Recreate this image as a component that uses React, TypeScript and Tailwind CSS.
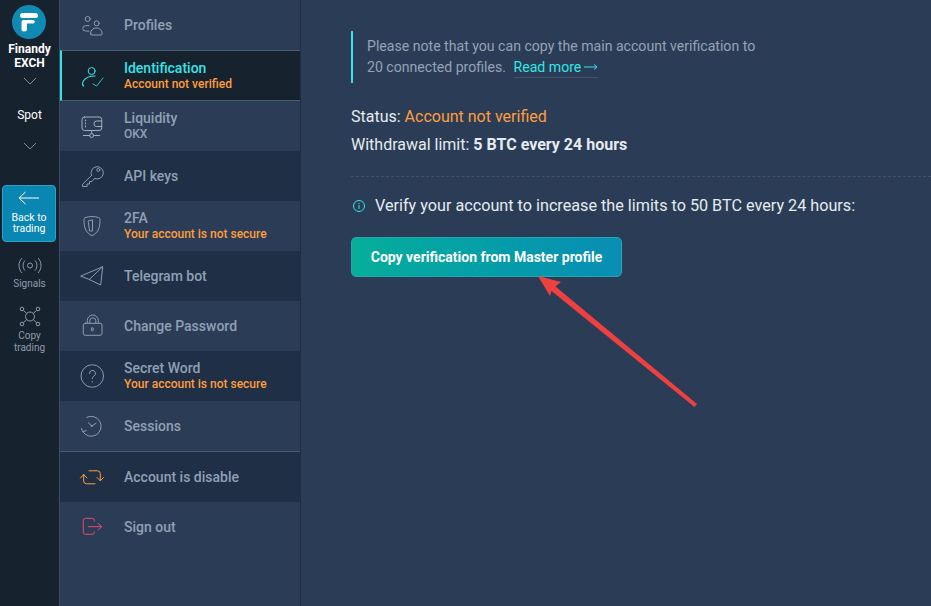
import type { ReactNode } from "react";

const stroke = "#8f9bac";

function Svg({ children, color = stroke }: { children: ReactNode; color?: string }) {
  return (
    <svg width="28" height="28" viewBox="0 0 28 28" fill="none" stroke={color} strokeWidth="1" strokeLinecap="round" strokeLinejoin="round">
      {children}
    </svg>
  );
}

const icons = {
  profiles: (
    <Svg>
      <circle cx="8.700" cy="8" r="2.500" />
      <path d="M10 14.700H6.500a2.700 2.700 0 0 0 0 5.400H10" />
      <circle cx="17.700" cy="12.300" r="2.500" />
      <path d="M11.700 23v-1a5.600 5 0 0 1 11.300 0v1a1 1 0 0 1-1 1h-9.300a1 1 0 0 1-1-1z" />
    </Svg>
  ),
  identification: (
    <Svg color="#35e4e6">
      <circle cx="12.700" cy="9" r="3.500" />
      <path d="M4.700 24c-1.500-1-1.500-3 0-5.500 2-3 5-4.500 11.300-4.500" strokeWidth="1.200" />
      <path d="M14 22l3.700 2L24 16" strokeWidth="0.800" />
    </Svg>
  ),
  wallet: (
    <Svg color="#a3aebc">
      <rect x="3" y="5" width="19.700" height="13.500" rx="2.500" />
      <path d="M22.700 9h-5a2.700 2.700 0 0 0 0 5.500h5" />
      <path d="M6.500 8v1M6.500 11v1M6.500 14v1" />
      <path d="M12.700 18.500V21.500M4.300 23.500h6.400M14.700 23.500h6" />
      <circle cx="12.700" cy="23.500" r="2" />
    </Svg>
  ),
  key: (
    <Svg>
      <path d="M12.500 13.500a6.200 6.200 0 1 1 3 3" />
      <circle cx="19.300" cy="8" r="1.500" />
      <path d="M12.500 13.500L3.500 22.300v2.200h4.500v-2.500h2.500V19.500H13l2.500-3" />
    </Svg>
  ),
  shield: (
    <Svg>
      <path d="M6.500 5.500c4-1.300 9-1.300 13 0 1 .3 1.500 1 1.500 2 0 7-1 13-8 16.200C6 20.500 5 14.500 5 7.500c0-1 .5-1.700 1.500-2z" />
      <path d="M9.500 9l4-1.200V19h-2.500z" />
    </Svg>
  ),
  telegram: (
    <Svg>
      <path d="M2 14L23.700 4.700L21.700 23L10.300 17.500Z" />
      <path d="M10.300 17.500L23.700 4.700" />
    </Svg>
  ),
  lock: (
    <Svg>
      <path d="M8.300 11V8.500a5.500 5.500 0 0 1 11 0V11" />
      <path d="M10.800 11V8.800a3 3 0 0 1 6 0V11" />
      <rect x="4.300" y="11.300" width="18.700" height="12" rx="2" />
      <ellipse cx="13.300" cy="17.300" rx="1" ry="1.800" />
    </Svg>
  ),
  question: (
    <Svg>
      <circle cx="13.300" cy="14" r="11.300" />
      <path d="M10.500 11.500a3 3 0 1 1 4.500 2.500c-1 .7-1.700 1.300-1.700 2.500" />
      <path d="M13.300 19.500v.5" />
    </Svg>
  ),
  sessions: (
    <Svg>
      <path d="M7.700 5.300a10 10 0 1 1-4 14.400" />
      <path d="M2.500 16.500l1.200 3.200 3.500-1" />
      <path d="M12.700 14l-3.400-3.300M12.700 14l4.300-2.700" />
      <circle cx="12.700" cy="14" r="0.600" />
    </Svg>
  ),
  disable: (
    <Svg color="#ff9d3c">
      <path d="M10 7.800h8.500a2.800 2.800 0 0 1 2.800 2.800v7" />
      <path d="M18 14.500l3.300 3.300 3.200-3.300" />
      <path d="M16 20.800H7.500a2.800 2.800 0 0 1-2.800-2.800v-6.500" />
      <path d="M1.500 15l3.200-3.500L8 15" />
    </Svg>
  ),
  signout: (
    <Svg color="#e84a68">
      <path d="M15.300 8V7.300a2 2 0 0 0-2-2H6.300a2 2 0 0 0-2 2v12a2 2 0 0 0 2 2h7a2 2 0 0 0 2-2v-.500" />
      <path d="M9.300 13.700h13.400M19 10.500l3.700 3.200-3.700 3.300" />
    </Svg>
  ),
};

type Row = {
  title: string;
  sub?: string;
  subColor?: string;
  icon: ReactNode;
  dark?: boolean;
  h: string;
  extra?: string;
};

const rows: Row[] = [
  { title: "Profiles", icon: icons.profiles, h: "h-[50px]" },
  { title: "Identification", sub: "Account not verified", icon: icons.identification, h: "h-[51px]" },
  { title: "Liquidity", sub: "OKX", subColor: "text-[#90a0b5]", icon: icons.wallet, h: "h-[50px]" },
  { title: "API keys", icon: icons.key, dark: true, h: "h-[50px]" },
  { title: "2FA", sub: "Your account is not secure", icon: icons.shield, h: "h-[50px]" },
  { title: "Telegram bot", icon: icons.telegram, dark: true, h: "h-[50px]" },
  { title: "Change Password", icon: icons.lock, h: "h-[50px]" },
  { title: "Secret Word", sub: "Your account is not secure", icon: icons.question, dark: true, h: "h-[50px]" },
  { title: "Sessions", icon: icons.sessions, h: "h-[51px]", extra: "border-b border-[#4a5a70]" },
  { title: "Account is disable", icon: icons.disable, dark: true, h: "h-[50px]" },
  { title: "Sign out", icon: icons.signout, h: "h-[50px]" },
];

function MenuRow({ row }: { row: Row }) {
  return (
    <div className={`flex items-center ${row.h} ${row.dark ? "bg-[#1f2f45]" : "bg-[#2b3d56]"} ${row.extra ?? ""}`}>
      <div className="ml-[19px] w-[45px] shrink-0">{row.icon}</div>
      <div className="flex flex-col">
        <span className="text-[14px] leading-[16px] font-medium text-[#90a0b5]">{row.title}</span>
        {row.sub && (
          <span className={`text-[12px] leading-[16px] font-medium ${row.subColor ?? "text-[#ff9d3c]"}`}>{row.sub}</span>
        )}
      </div>
    </div>
  );
}

export default function App() {
  return (
    <div className="relative flex h-[606px] w-[931px] overflow-hidden bg-[#2b3d56] font-['Roboto',sans-serif]">
      {/* left rail */}
      <aside className="flex h-full w-[60px] shrink-0 flex-col items-center border-r border-[#3c4c62] bg-[#17222f]">
        <div className="mt-[5px] ml-[12px] h-[34px] w-[34px] self-start rounded-full bg-[#0e8ab3]">
          <svg width="34" height="34" viewBox="0 0 34 34" fill="#fff">
            <path d="M10.500 8h13a2.500 2.500 0 0 1 0 5h-13a2.500 2.500 0 0 1 0-5z" />
            <path d="M9.500 17a2 2 0 0 1 2-2H21a1.800 1.800 0 0 1 0 3.600h-6V24a2.500 2.500 0 0 1-2.500 2.500H11.500a2 2 0 0 1-2-2z" />
          </svg>
        </div>
        <div className="mt-[3px] text-center text-[12px] leading-[14px] font-bold text-white">
          Finandy
          <br />
          EXCH
        </div>
        <svg className="mt-[7px]" width="14" height="8" viewBox="0 0 14 8" fill="none" stroke="#7c8896">
          <path d="M1 1l6 6 6-6" />
        </svg>
        <div className="mt-[23px] text-[12px] leading-[14px] text-white">Spot</div>
        <svg className="mt-[20px]" width="14" height="8" viewBox="0 0 14 8" fill="none" stroke="#7c8896">
          <path d="M1 1l6 6 6-6" />
        </svg>
        <div className="mt-[35px] ml-[2px] flex h-[57px] w-[54px] flex-col items-center self-start rounded-[4px] border border-[#2aa3c8] bg-[#0a86b2]">
          <svg className="mt-[5px]" width="22" height="14" viewBox="0 0 22 14" fill="none" stroke="#fff">
            <path d="M21 7H1M7.500 1L1 7l6.500 6" />
          </svg>
          <div className="mt-[7px] text-center text-[10.500px] leading-[11px] text-white">
            Back to
            <br />
            trading
          </div>
        </div>
        <svg className="mt-[15px]" width="24" height="17" viewBox="0 0 24 17" fill="none" stroke="#8f9bac">
          <circle cx="12" cy="8.500" r="2.500" />
          <path d="M7 3.500C4.500 6 4.500 11 7 13.500M17 3.500c2.500 2.500 2.500 7.500 0 10M4 1C0 5 0 12 4 16M20 1c4 4 4 11 0 15" />
        </svg>
        <div className="mt-[4px] text-[10px] leading-[12px] text-[#8f9bac]">Signals</div>
        <svg className="mt-[16px]" width="22" height="21" viewBox="0 0 22 21" fill="none" stroke="#8f9bac">
          <circle cx="11" cy="10.500" r="4.500" />
          <circle cx="3" cy="3" r="1.800" />
          <circle cx="19" cy="3" r="1.800" />
          <circle cx="3" cy="18" r="1.800" />
          <circle cx="19" cy="18" r="1.800" />
          <path d="M4.500 4.500l3.300 3M17.500 4.500l-3.300 3M4.500 16.500l3.300-3M17.500 16.500l-3.300-3" />
        </svg>
        <div className="mt-[3px] text-center text-[10px] leading-[12px] text-[#8f9bac]">
          Copy
          <br />
          trading
        </div>
      </aside>

      {/* settings menu */}
      <nav className="relative flex h-full w-[241px] shrink-0 flex-col border-r border-[#1f2d40] bg-[#2b3d56]">
        {rows.map((row) =>
          row.title === "Identification" ? (
            <div key={row.title} className="flex h-[51px] items-center border-y border-[#4a5a70] border-l-[2px] border-l-[#35e4e6] bg-[#17222f]">
              <div className="ml-[17px] w-[45px] shrink-0">{row.icon}</div>
              <div className="flex flex-col">
                <span className="text-[14px] leading-[16px] font-medium text-[#35e4e6]">{row.title}</span>
                <span className="text-[12px] leading-[16px] font-medium text-[#ff9d3c]">{row.sub}</span>
              </div>
            </div>
          ) : (
            <MenuRow key={row.title} row={row} />
          ),
        )}
      </nav>

      {/* content */}
      <main className="flex-1 pt-[31px]">
        <div className="ml-[50px] w-[420px] border-l-[2px] border-[#35e4e6] pl-[14px] text-[14.100px] leading-[21px] text-[#95a3b6]">
          <div className="py-[5px]">
            Please note that you can copy the main account verification to 20 connected profiles.{" "}
            <span className="ml-[4px] inline-flex items-center gap-[3px] border-b border-[#44536a] pb-[1px] leading-[18px] text-[#35e4e6]">
              Read more
              <svg width="14" height="8" viewBox="0 0 14 8" fill="none" stroke="#35e4e6">
                <path d="M0 4h13M10 1.500L13 4l-3 2.500" />
              </svg>
            </span>
          </div>
        </div>
        <div className="mt-[20px] ml-[50px] text-[16px] leading-[28px] text-[#e6ebf0]">
          <div>
            Status: <span className="text-[#ff9d3c]">Account not verified</span>
          </div>
          <div>
            Withdrawal limit: <span className="font-bold">5 BTC every 24 hours</span>
          </div>
        </div>
        <div className="mt-[17px] ml-[50px] border-t border-dashed border-[#44536a]" />
        <div className="mt-[19px] ml-[52px] flex items-center gap-[10px] text-[16.200px] leading-[20px] text-[#e6ebf0]">
          <svg width="12" height="12" viewBox="0 0 12 12" fill="none" stroke="#35e4e6">
            <circle cx="6" cy="6" r="5.500" />
            <path d="M6 5v4M6 3v1" />
          </svg>
          Verify your account to increase the limits to 50 BTC every 24 hours:
        </div>
        <button className="mt-[21px] ml-[50px] h-[40px] w-[271px] rounded-[5px] border border-[#22a8ae] bg-gradient-to-r from-[#07ae9a] to-[#0a8db5] text-[14px] font-bold text-white">
          Copy verification from Master profile
        </button>
      </main>

      {/* red annotation arrow */}
      <svg className="absolute top-[270px] left-[530px]" width="175" height="145" viewBox="0 0 175 145" fill="#ef4040">
        <path d="M8 6L31 12L25.500 16.500L167 134L164.500 137L21.500 21L20 26Z" />
      </svg>
    </div>
  );
}
